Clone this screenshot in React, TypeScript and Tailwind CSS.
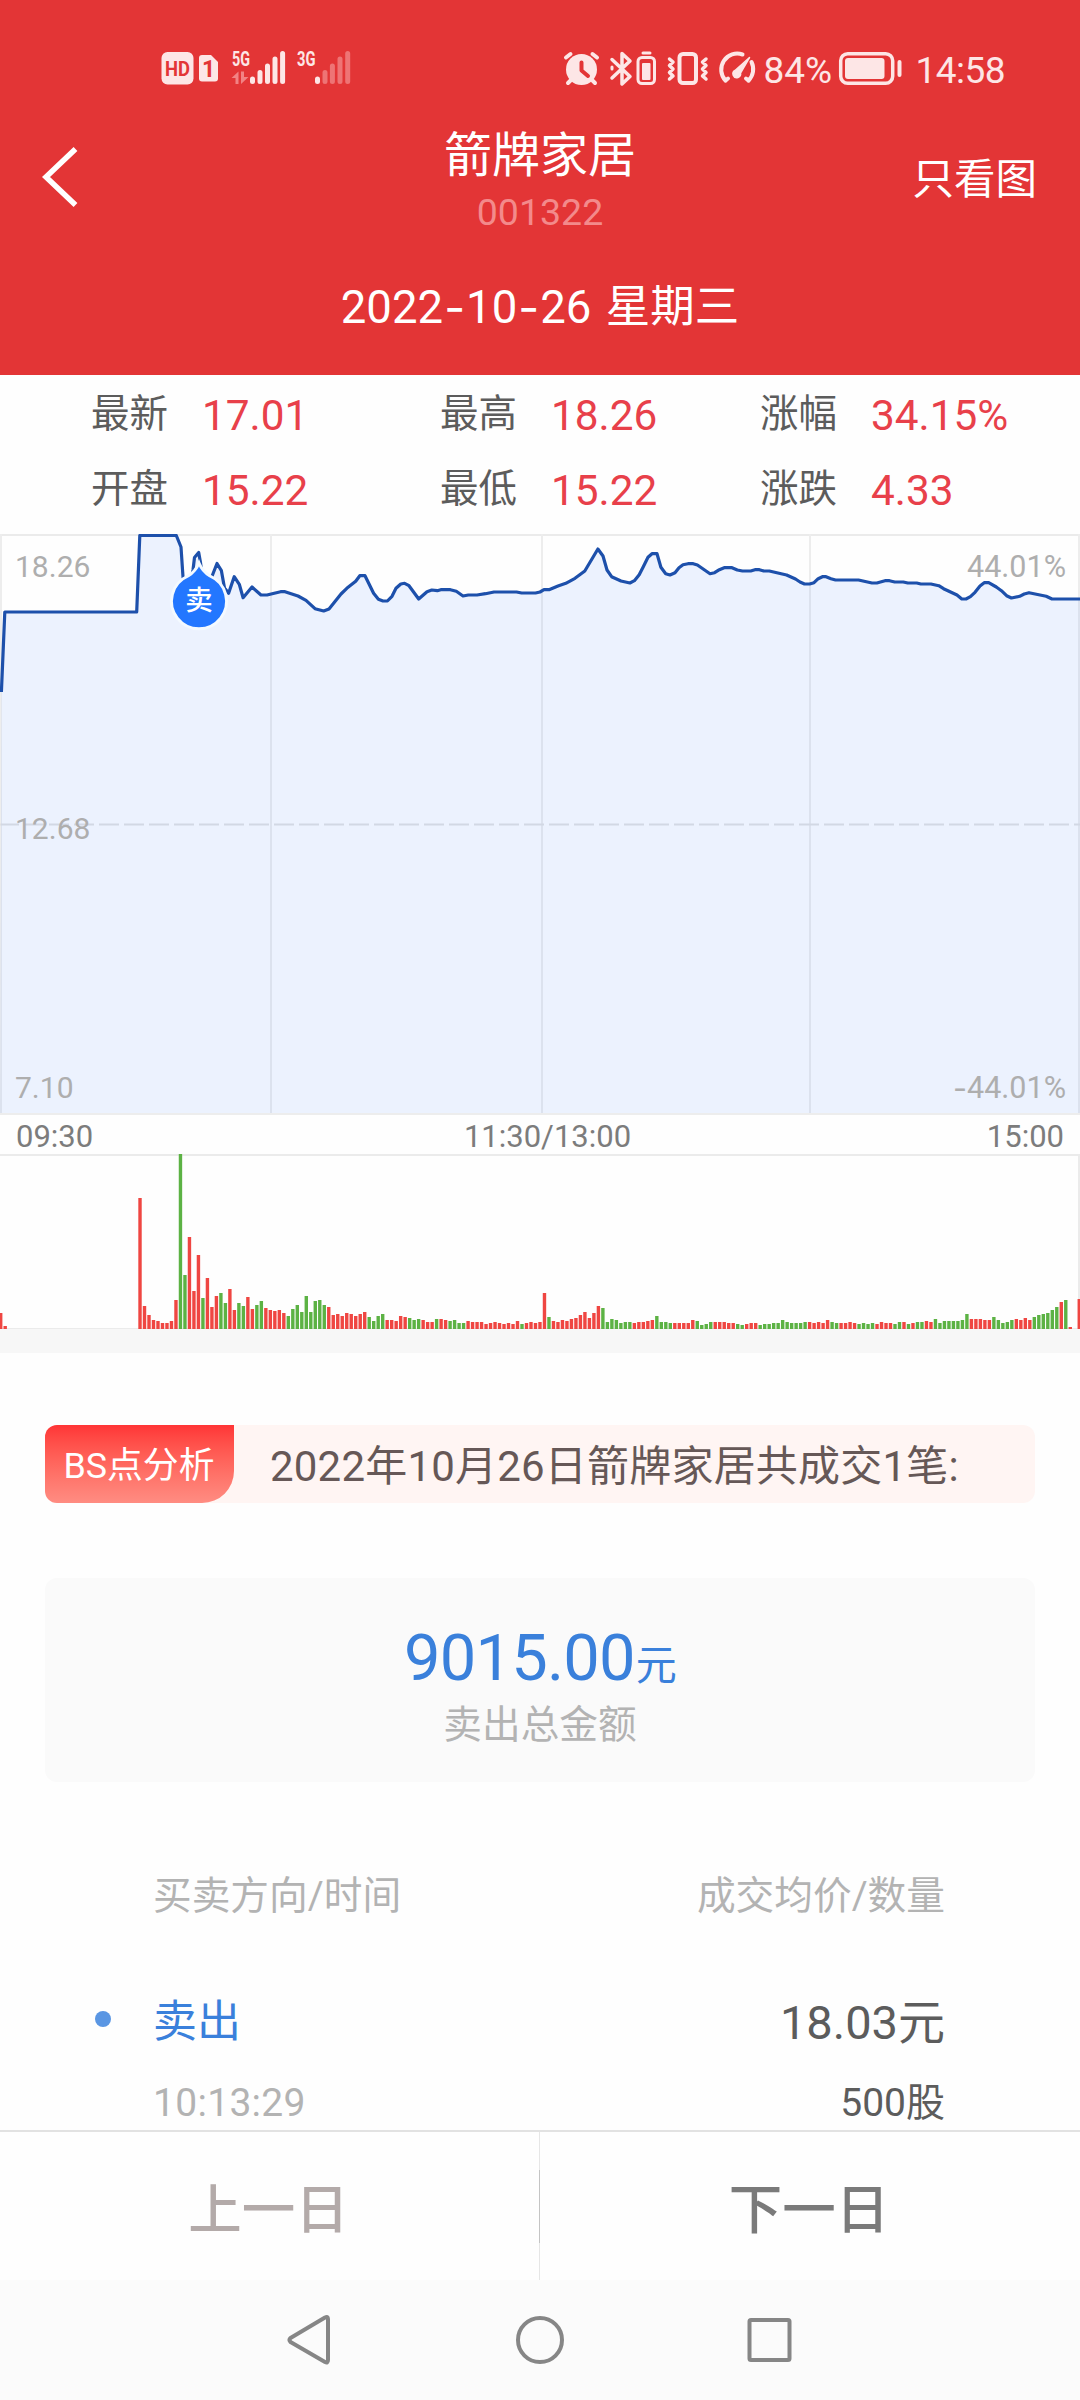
const BLUE_LINE = '#1d50ab';

const stats = [
  [
    { label: '最新', value: '17.01' },
    { label: '最高', value: '18.26' },
    { label: '涨幅', value: '34.15%' },
  ],
  [
    { label: '开盘', value: '15.22' },
    { label: '最低', value: '15.22' },
    { label: '涨跌', value: '4.33' },
  ],
];

// price curve, in chart pixels
const price =
  '1.4,158 4.8,78 136.7,78 139.8,1.5 176.3,1.5 181,13 183,43 188,62 193,36 194.5,23.5 198.7,18.5 200.4,28 205,62 212.5,41 217,29.5 221.4,36.7 224.5,54 228.6,59.3 234.2,42.7 239.3,50.3 243.1,63.7 252,53 261,61 267,61 280.6,57.7 285,57.7 298,62 306,66.3 315,74.7 323.7,77 329,75 341,60 346.8,54.3 355.7,47.3 359.8,41.7 365,41.7 373.6,59.3 378.4,65.3 383,67 387.4,67 392,62.3 396,54.3 400.8,50 404.6,49.3 409,51.7 418.7,65 427,57.7 431.8,56 437.3,56.7 440.8,55.7 450.4,55.7 456.3,57.3 463,62 468.3,61 477,61 485.5,59.7 494,58 516.5,58 521.7,59 535.5,59 540,58 544,55.7 549,55.7 558,52 565.8,49.3 575,44.3 584.8,37 597.9,15 603,22 607,36 611.6,42.7 621,47 629.9,49 634.4,46.7 639.2,40.7 643.3,32.7 648,23.3 652,19.7 657,19.7 660.9,33.3 665.7,39.7 670,41 675,38.7 679,33.7 683,30.7 688,29.7 693.2,29.7 697.4,31 710,39.7 714.6,38.7 719.4,35.7 724.2,33.7 732,33.7 737.3,36 742.5,37 750.7,37 755,35.7 759.4,35.7 763.8,37 769.3,37 786.6,41 795.5,45 800,48 804.5,50 809.6,50 814,48.7 818.2,44.7 822.4,42.7 826,42.7 831,44.7 835.5,46 858.5,46 872,49 876.8,49 885,46.7 889.5,46.7 894.7,48 903.3,48 907.8,49 916.7,49 920.9,50 930.9,50 938.8,51.7 943.6,54.7 957,61 961.8,65 966,65 970.4,62.7 975,58.3 980,52 984.2,48.7 988.7,48.7 996.3,53 1001.4,56.7 1006.6,61.7 1011.4,64 1019.7,62.3 1024.2,60 1029,58.7 1046.2,62.3 1052,65 1080,65';

// one entry per minute: height plus r(ed) / g(reen)
const volume = (
  '16r 3r' + ' 0r'.repeat(29) +
  ' 131r 23r 14r 9r 8r 6r 6r 8r 29r 175g 54g 92r 38r 74r 31g 51r 22r 33r 36g 26g 40r 19r 26g 23g 32r 20r 24g 28g 21r 19r 18r 19r 16r 13g 20g 24g 17g 33g 17g 28g 29g 24g' +
  ' 22r 14r 15r 13r 16r 15r 13r 15r 17r 12g 8g 13g 15g 9r 9r 8r 13r 12r 11g 9g 10g 9r 7r 7r 10g 10r 9r 8g 9g 6g 6g 8r 7r 7r 7r 5r 6r 7r 6r 5r 6r 5r 8r 5g 6r 7r 6r 7r' +
  ' 36r 12g 8r 7r 9r 8r 10r 11r 14r 17r 11r 16r 23r 21g 7g 10g 9g 6g 7g 7g 6r 7r 7r 8r 9r 13g 7g 7g 6g 6r 6r 6r 6r 9r 8g 4g 5g 7g 7r 7r 7r 6r 6r 5g 4g 5r 6r 6r 4g 5g 5g 6g 6g 9g 7g 6g 6g 6g 7g' +
  ' 7r 6r 7r 6r 9r 7g 6g 6r 6r 7r 6r 5g 6g 5g 6g 5r 7r 6r 6r 5g 7g 7r 5g 6r 7g 7g 8r 7r 10g 6g 8g 8g 8g 8g 9g 15g 10r 10r 10r 9r 9r 12g 9g 6g 7g 9g 10r 9r 11r 9r 12g 14g 15g 16g 19g 22g 27r 29g 2r 0r 30r'
).split(' ').map((v) => ({ h: parseInt(v), up: v.endsWith('r') }));

export default function App() {
  return (
    <div className="w-[1080px] h-[2400px] overflow-hidden bg-[#fefefe] font-['Roboto','Noto_Sans_CJK_SC',sans-serif] flex flex-col">
      <Header />

      {/* Quote summary */}
      <div className="h-[159px] shrink-0 pt-[2px]">
        {stats.map((row, i) => (
          <div key={i} className="grid grid-cols-[349px_320px_1fr] h-[75px] items-center pl-[91px]">
            {row.map((s) => (
              <div key={s.label} className="flex items-center leading-none">
                <span className="w-[111px] text-[38.5px] text-[#5c5c5c]">{s.label}</span>
                <span className="text-[42.3px] text-[#e8404a] pt-[3px]">{s.value}</span>
              </div>
            ))}
          </div>
        ))}
      </div>

      <PriceChart />
      <div className="h-[39px] shrink-0 flex justify-between items-center px-4 pt-1 text-[31px] leading-none text-[#7c7c7c]">
        <span className="w-[200px]">09:30</span>
        <span className="pl-[15px]">11:30/13:00</span>
        <span className="w-[200px] text-right">15:00</span>
      </div>
      <VolumeChart />
      <div className="h-6 shrink-0 bg-[#f7f7f7]" />

      {/* Analysis banner */}
      <div className="mt-[72px] mx-[45px] h-[78px] shrink-0 flex items-center rounded-xl bg-[#fff5f3] overflow-hidden">
        <div className="w-[189px] h-full flex items-center justify-center rounded-br-[32px] bg-gradient-to-b from-[#ff3436] to-[#ff8c82] text-white text-[35.8px] leading-none pt-1.5 pr-px">
          BS点分析
        </div>
        <p className="pl-[36px] pt-1.5 text-[42px] tracking-[0.2px] leading-none text-[#665857] whitespace-nowrap">
          2022年10月26日箭牌家居共成交1笔:
        </p>
      </div>

      {/* Total amount */}
      <div className="mt-[75px] mx-[45px] h-[204px] shrink-0 rounded-xl bg-[#fafafa] flex flex-col items-center pt-[47px]">
        <div className="h-[66px] text-[#3a80db] text-[65px] leading-[66px] tracking-[-0.8px]">
          9015.00<span className="text-[41px] ml-[1px]">元</span>
        </div>
        <div className="mt-[14px] text-[38.7px] leading-10 text-[#b3b3b3]">卖出总金额</div>
      </div>

      {/* Trade list */}
      <div className="pl-[153px] pr-[135px] shrink-0">
        <div className="mt-[89px] flex justify-between text-[38.7px] leading-[50px] text-[#b3b3b3]">
          <span>买卖方向/时间</span>
          <span>成交均价/数量</span>
        </div>
        <div className="mt-[71px] h-[60px] flex items-center justify-between leading-none">
          <div className="flex items-center -ml-[58px]">
            <span className="size-4 rounded-full bg-[#5a96e3] mr-[42px] -mt-1.5" />
            <span className="text-[44px] text-[#3a80db]">卖出</span>
          </div>
          <span className="text-[47px] text-[#5c5c5c]">18.03元</span>
        </div>
        <div className="mt-[31px] flex justify-between text-[39px] leading-10">
          <span className="text-[#b3b3b3] tracking-[0.3px]">10:13:29</span>
          <span className="text-[#5c5c5c]">500股</span>
        </div>
      </div>

      {/* Day switcher */}
      <div className="mt-[7px] h-[150px] shrink-0 border-t-2 border-[#e2e2e2] bg-[#fefefe] grid grid-cols-[539px_1px_540px] text-[53.5px] font-medium leading-none">
        <button className="text-[#b3aaa9] pt-[10px] pr-0.5">上一日</button>
        <div className="bg-[#e6e6e6] flex items-center">
          <div className="w-px h-[73px] bg-[#c4c4c4]" />
        </div>
        <button className="text-[#7a7a7a] pt-[10px] pr-0.5">下一日</button>
      </div>

      {/* System navigation */}
      <div className="h-[120px] shrink-0 bg-[#fbfbfb]">
        <svg className="w-full h-full" viewBox="0 0 1080 120" fill="none" stroke="#868686" strokeWidth="4" strokeLinejoin="round">
          <path d="M290.5 58 L325 37.5 Q328 36 328 39 V80 Q328 83.500 325 82 L290.500 62 Q288.500 60 290.500 58 Z" />
          <circle cx="540" cy="60" r="22" />
          <rect x="749.500" y="40" width="40" height="40" rx="1.500" />
        </svg>
      </div>
    </div>
  );
}

function Header() {
  return (
    <div className="h-[375px] shrink-0 bg-[#e33536] text-white">
      <StatusBar />
      <div className="h-[122px] grid grid-cols-[1fr_auto_1fr] items-center leading-none">
        <svg className="ml-[40px] mt-[-4px]" width="40" height="64" viewBox="0 0 40 64" fill="none" stroke="currentColor" strokeWidth="5.5">
          <path d="M35.500 4 L6 32 L35.500 60" />
        </svg>
        <div className="flex flex-col items-center pt-[2px]">
          <h1 className="text-[48px] leading-[56px]">箭牌家居</h1>
          <span className="mt-[8px] text-[37.5px] leading-10 text-[#f38a8b]">001322</span>
        </div>
        <span className="justify-self-end mr-[43px] pt-[2px] text-[41.5px]">只看图</span>
      </div>
      <div className="h-[135px] flex items-center justify-center text-[45.5px] leading-none whitespace-pre">
        2022<Dash />10<Dash />26 <span className="text-[44.5px] ml-[3px]">星期三</span>
      </div>
    </div>
  );
}

function Dash() {
  return <span className="font-['Inter'] w-[23px] text-center">-</span>;
}

function StatusBar() {
  return (
    <div className="h-[118px] text-[#fde6e6]">
      <svg className="w-full h-full" viewBox="0 0 1080 118" fill="none" stroke="currentColor" strokeLinecap="round" strokeLinejoin="round">
        {/* HD + SIM 1 */}
        <g stroke="none" fill="currentColor">
          <rect x="161.500" y="52" width="32" height="32.500" rx="6" />
          <path d="M202 55 H211 L218 62 V78.500 Q218 81.500 215 81.500 H202 Q199 81.500 199 78.500 V58 Q199 55 202 55 Z" />
        </g>
        <g stroke="none" className="font-['Roboto'] font-bold">
          <text x="165" y="76" fontSize="21" fill="#e33536" textLength="25" lengthAdjust="spacingAndGlyphs">HD</text>
          <text x="202" y="77" fontSize="23" fill="#e33536">1</text>
          <text x="232" y="66" fontSize="21" fill="currentColor" textLength="18" lengthAdjust="spacingAndGlyphs">5G</text>
          <text x="297" y="66" fontSize="21" fill="currentColor" textLength="18.500" lengthAdjust="spacingAndGlyphs">3G</text>
        </g>
        <g stroke="none" fill="#f28384">
          <path d="M231.500 78 L238.500 71.500 V84 H235.500 V78 Z" />
          <path d="M241 71.500 H244 V77 H248.500 L241 84 Z" />
        </g>
        {/* signal strength */}
        <g strokeWidth="5">
          <path d="M252.500 79 V81.500 M260 72.500 V81.500 M267.500 66 V81.500 M275 59 V81.500 M282.600 53.500 V81.500 M317.500 79 V81.500" />
          <path stroke="#ee7475" d="M325 72.500 V81.500 M332.400 66 V81.500 M340 59 V81.500 M347.700 53.500 V81.500" />
        </g>
        {/* alarm */}
        <circle cx="581.500" cy="69.500" r="15.500" fill="currentColor" stroke="none" />
        <path strokeWidth="4" d="M566 57.500 L570.500 54 M597 57.500 L592.500 54 M571 80 L568 83 M592 80 L595 83" />
        <path strokeWidth="4" stroke="#e33536" d="M581.500 62.500 V70.500 L588 76" />
        {/* bluetooth */}
        <path strokeWidth="3.500" d="M612 59.500 L630 76.500 L622 84 V53.500 L630 61 L612 78" />
        <path strokeWidth="3" d="M612 67 V69" />
        <path strokeWidth="3" d="M643 53 H650" />
        <rect x="638" y="57.500" width="16.500" height="26" rx="4" strokeWidth="3" />
        <rect x="642" y="63" width="8.500" height="17" rx="1" fill="currentColor" stroke="none" />
        {/* vibrate */}
        <rect x="679.500" y="54" width="16.500" height="29" rx="3.500" strokeWidth="4" />
        <path strokeWidth="3.500" d="M669.500 59 L673 62 L669.500 65.500 L673 69 L669.500 72.500 L673 76 L669.500 79 M706 59 L702.500 62 L706 65.500 L702.500 69 L706 72.500 L702.500 76 L706 79" />
        {/* data gauge */}
        <path strokeWidth="4" d="M725.500 80.500 A16 16 0 0 1 742.500 54.500 M751.500 62 A16 16 0 0 1 748.500 80.500" />
        <path strokeWidth="4" d="M725.500 80.500 L728 78.500 M748.500 80.500 L746 78.500" />
        <path fill="currentColor" strokeWidth="1.500" d="M749.500 57.500 L740.500 73 A3.800 3.800 0 1 1 735 70.500 Z" />
        <g stroke="none" fill="currentColor" fontSize="37" className="font-['Roboto']">
          <text x="763.500" y="83" textLength="68.500">84%</text>
          <text x="915.500" y="83" textLength="90">14:58</text>
        </g>
        {/* battery */}
        <rect x="840.700" y="53.700" width="52" height="29.500" rx="7" strokeWidth="3.500" />
        <rect x="845" y="58" width="39.500" height="21" rx="3" fill="currentColor" stroke="none" />
        <path strokeWidth="4" d="M899.500 62 V75" />
      </svg>
    </div>
  );
}

function PriceChart() {
  return (
    <div className="relative h-[581px] shrink-0 text-[30px] leading-none text-[#aeaeae]">
      <svg className="block" width="1080" height="581" fill="none">
        <rect x="0" y="0" width="1080" height="2" fill="#ebebeb" />
        <g fill="#ededed">
          <rect x="0" width="2" height="581" />
          <rect x="270" width="2" height="581" />
          <rect x="541" width="2" height="581" />
          <rect x="809" width="2" height="581" />
          <rect x="1078" width="2" height="581" />
          <rect x="0" y="579" width="1080" height="2" />
        </g>
        <path d="M-1 290.500 H1080" stroke="#e2e2e2" strokeWidth="2" strokeDasharray="20 5" />
        <polygon points={`0,579 ${price} 1080,579`} fill="#3b82ff" fillOpacity="0.095" />
        <polyline points={price} stroke={BLUE_LINE} strokeWidth="3.2" strokeLinejoin="round" />
      </svg>
      <span className="absolute left-[15px] top-[18px]">18.26</span>
      <span className="absolute right-[14px] top-[18px] text-[30.5px]">44.01%</span>
      <span className="absolute left-[15px] top-[280px]">12.68</span>
      <span className="absolute left-[15px] top-[539px]">7.10</span>
      <span className="absolute right-[14px] top-[539px] flex text-[30.5px]">
        <span className="font-['Inter']">-</span>44.01%
      </span>

      {/* Sell marker */}
      <div className="absolute left-[167px] top-[24px] w-16 h-[76px] flex items-center justify-center pt-[9px] text-white text-[27.5px] font-medium">
        <svg className="absolute inset-0" width="64" height="76" viewBox="0 0 64 76">
          <path
            d="M32 5 C34 10 38 15 43 18 A27.500 27.500 0 1 1 21 18 C26 15 30 10 32 5 Z"
            fill="#2377ff"
            stroke="#f4faff"
            strokeWidth="3"
          />
        </svg>
        <span className="relative">卖</span>
      </div>
    </div>
  );
}

function VolumeChart() {
  return (
    <svg className="block shrink-0" width="1080" height="175">
      <rect width="1080" height="2" fill="#ebebeb" />
      <rect x="1078" width="2" height="175" fill="#ebebeb" />
      <rect y="174" width="1080" height="1" fill="#ebebeb" />
      {volume.map((v, i) => (
        <rect key={i} x={i * 4.494 - 1} y={175 - v.h} width="3.400" height={v.h} fill={v.up ? '#ef4642' : '#5cb244'} />
      ))}
    </svg>
  );
}
